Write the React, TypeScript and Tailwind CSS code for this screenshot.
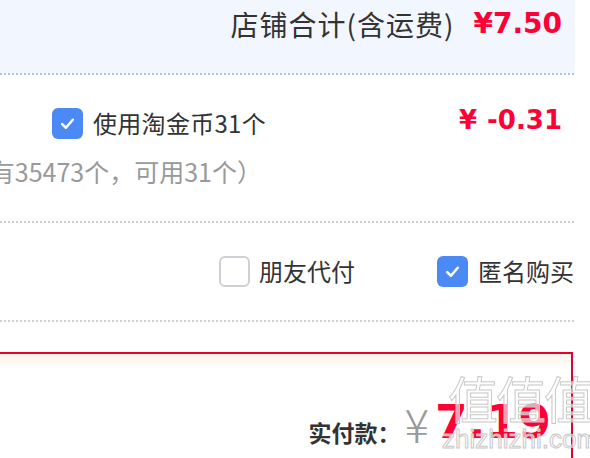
import React from "react";

const cjk = { fontFamily: '"Noto Sans CJK SC", "Noto Sans", sans-serif' };
const num = { fontFamily: '"DejaVu Sans", "Liberation Sans", sans-serif' };

function Check({ checked }: { checked: boolean }) {
  if (checked) {
    return (
      <div className="w-[31px] h-[31px] rounded-[6px] bg-[#4b8af5] flex items-center justify-center shrink-0">
        <svg width="17" height="17" viewBox="0 0 16 16" fill="none">
          <path d="M3 8.5 L6.5 12 L13 4.5" stroke="white" strokeWidth="2.4" strokeLinecap="round" strokeLinejoin="round" />
        </svg>
      </div>
    );
  }
  return <div className="w-[31px] h-[31px] rounded-[6px] border-2 border-[#cfd0d6] bg-white shrink-0" />;
}

export default function App() {
  return (
    <div className="w-[590px] h-[458px] overflow-hidden bg-white relative" style={cjk}>
      <div className="w-[575px] flex flex-col">
        {/* shop total */}
        <div className="h-[73px] bg-[#f2f6fe] flex items-start justify-end pr-[13px] pt-[4px] gap-[19px]">
          <span className="text-[28px] leading-[40px] tracking-[1px] text-[#333]">店铺合计(含运费)</span>
          <span className="text-[28px] leading-[40px] font-bold text-[#ff0036]" style={num}>¥7.50</span>
        </div>
        <div className="h-[2px] bg-[repeating-linear-gradient(to_right,#a7c1ea_0_2px,transparent_2px_4px)]" />

        {/* taojinbi */}
        <div className="h-[146px] flex flex-col relative">
          <div className="flex items-center pl-[52px] pt-[32px] gap-[10px]">
            <Check checked />
            <span className="text-[24px] leading-[32px] text-[#333] tracking-[0.3px]">使用淘金币31个</span>
          </div>
          <div className="w-[262px] flex justify-end mt-[16px]">
            <span className="text-[25px] leading-[32px] text-[#999] whitespace-nowrap">（共有35473个，可用31个）</span>
          </div>
          <div className="absolute right-[13px] top-[28px] flex items-center gap-[10px] text-[#ff0036] font-bold text-[26px] leading-[34px]" style={num}>
            <span>¥</span>
            <span>-0.31</span>
          </div>
        </div>
        <div className="h-[2px] bg-[repeating-linear-gradient(to_right,#cfcfcf_0_2px,transparent_2px_4px)]" />

        {/* options */}
        <div className="h-[97px] flex items-center justify-end pr-[1px] pb-[1px]">
          <div className="flex items-center gap-[9px]">
            <Check checked={false} />
            <span className="text-[24px] leading-[32px] text-[#333]">朋友代付</span>
          </div>
          <div className="flex items-center gap-[10px] ml-[82px]">
            <Check checked />
            <span className="text-[24px] leading-[32px] text-[#333]">匿名购买</span>
          </div>
        </div>
        <div className="h-[2px] bg-[repeating-linear-gradient(to_right,#cfcfcf_0_2px,transparent_2px_4px)]" />

        <div className="h-[30px]" />

        {/* pay box */}
        <div className="ml-[-4px] w-[577px] h-[120px] border-t-2 border-r-2 border-[#e4002b] bg-[linear-gradient(to_bottom,#fff0ea,#ffffff_14px)] flex items-start justify-end pr-[20px] pt-[40px]">
          <div className="flex items-start">
            <span className="text-[23px] font-bold text-[#333] leading-[40px] mt-[18px]">实付款：</span>
            <span className="text-[46px] text-[#999] leading-[50px] mt-[4px] ml-[4px]" style={{ fontFamily: '"Noto Sans CJK SC", sans-serif', fontWeight: 300 }}>¥</span>
            <span className="text-[47px] font-bold text-[#ff0036] leading-[56px] ml-[6px]" style={num}>7.19</span>
          </div>
        </div>
      </div>

      {/* watermark */}
      <div className="absolute left-[442px] top-[370px] flex flex-col items-center pointer-events-none">
        <span className="text-[50px] leading-[54px] text-white/60 [-webkit-text-stroke:1px_#c8c8c8] tracking-[-2px]">值值值</span>
        <span className="text-[26px] leading-[30px] text-white/60 [-webkit-text-stroke:1px_#c8c8c8]" style={{ fontFamily: '"Liberation Sans", sans-serif' }}>zhizhizhi.com</span>
      </div>
    </div>
  );
}
